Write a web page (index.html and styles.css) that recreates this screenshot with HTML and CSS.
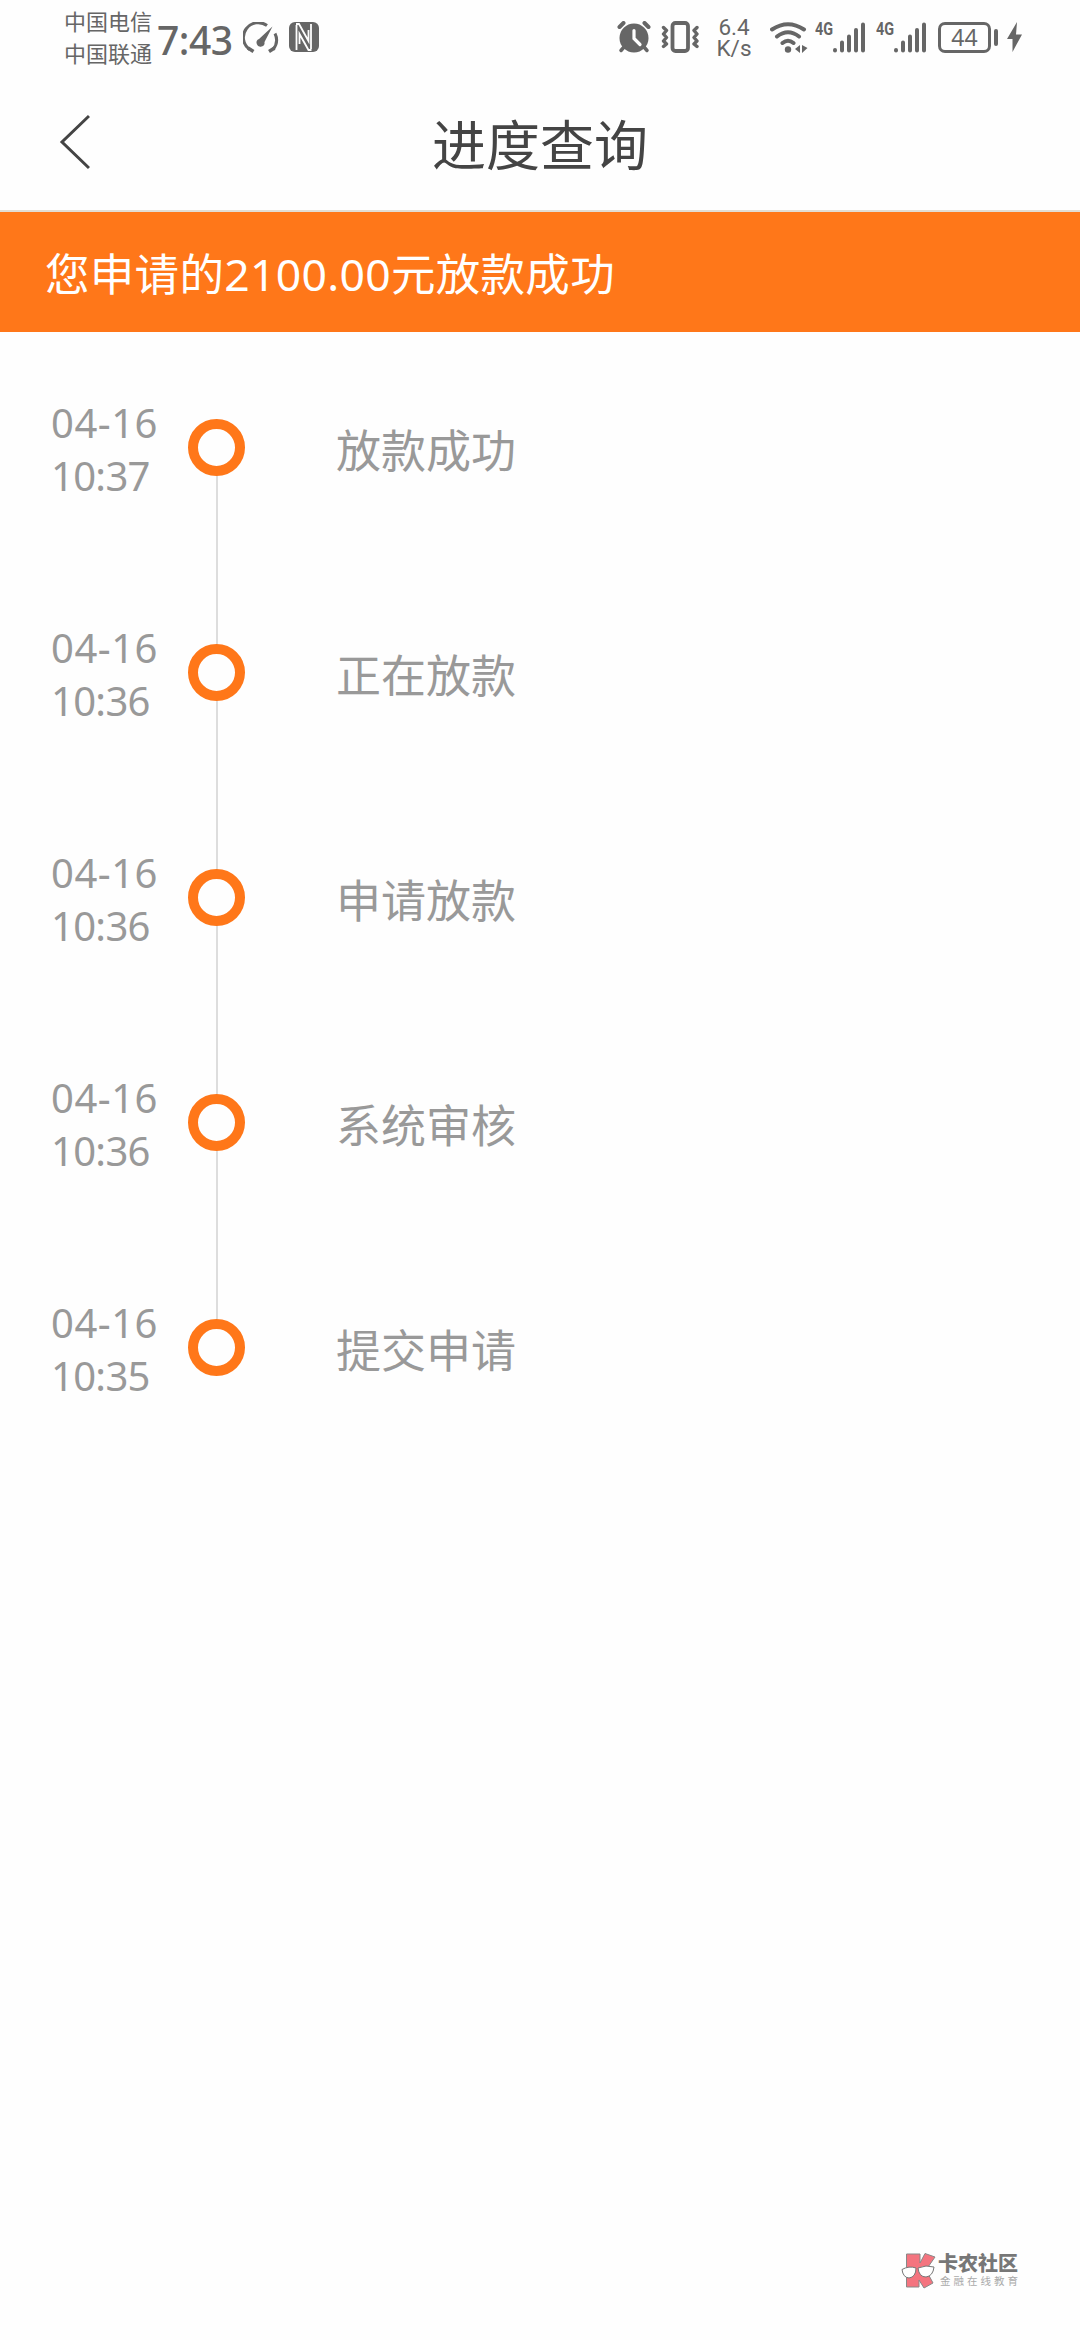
FILE: index.html
```html
<!DOCTYPE html>
<html lang="zh-CN">
<head>
    <meta charset="UTF-8">
    <meta name="viewport" content="width=device-width, initial-scale=1.0">
    <title>进度查询</title>
    <link rel="stylesheet" href="styles.css">
</head>
<body>
    <div class="status-bar">
        <div class="carriers">
            <span>中国电信</span>
            <span>中国联通</span>
        </div>
        <span class="clock">7:43</span>
        <svg class="icon gauge" width="36" height="34" viewBox="0 0 36 34">
            <path d="M6.500 27.500A14.500 14.500 0 0 1 24 3.500M32 11.500a15 15 0 0 1-2 16" fill="none" stroke="#666" stroke-width="3"/>
            <path d="M5 26l5.500 3.500M31.500 26l-5.500 3.500" stroke="#666" stroke-width="3.500"/>
            <path d="M29.500 4.500L21.500 20a4 4 0 1 1-5.500-3z" fill="#666"/>
        </svg>
        <svg class="icon nfc" width="30" height="30" viewBox="0 0 30 30">
            <rect width="30" height="30" rx="6" fill="#666"/>
            <path d="M7.500 28V3M22 2v25" fill="none" stroke="#fefefe" stroke-width="1.800"/>
            <path d="M7 2h3l9.500 17V8M22.500 28h-3L10.500 12v10" fill="none" stroke="#fefefe" stroke-width="1.800"/>
        </svg>

        <div class="status-right">
            <svg class="icon alarm" width="34" height="32" viewBox="0 0 34 32">
                <circle cx="17" cy="17" r="14.500" fill="#666"/>
                <path d="M2.500 6l4-4M31.500 6l-4-4" stroke="#666" stroke-width="4" stroke-linecap="round"/>
                <path d="M7 26l-3 3.500M27 26l3 3.500" stroke="#666" stroke-width="3.500" stroke-linecap="round"/>
                <path d="M17 9.500v8l6 6" fill="none" stroke="#fefefe" stroke-width="3.200" stroke-linecap="round"/>
            </svg>
            <svg class="icon vibrate" width="38" height="32" viewBox="0 0 38 32">
                <rect x="11.500" y="2" width="15.500" height="28" rx="3" fill="none" stroke="#666" stroke-width="3.800"/>
                <path d="M2.500 6.500l3 3-3 3.500 3 3.500-3 3.500 3 3-3 2.500M36 6.500l-3 3 3 3.500-3 3.500 3 3.500-3 3 3 2.500" fill="none" stroke="#666" stroke-width="3.400" stroke-linecap="round" stroke-linejoin="round"/>
            </svg>
            <div class="speed">
                <span>6.4</span>
                <span>K/s</span>
            </div>
            <svg class="icon wifi" width="38" height="32" viewBox="0 0 38 32">
                <path d="M2 7.500Q18 -3 34 7.500M7 14.500q11-8.500 22 0M12.500 21q5.500-4.500 11 0" fill="none" stroke="#666" stroke-width="4" stroke-linecap="round"/>
                <circle cx="18" cy="27.500" r="3.200" fill="#666"/>
                <path d="M25 27l5-4v8zM32 23l5.500 3-5.500 5z" fill="#666"/>
            </svg>
            <div class="signal">
                <span class="net">4G</span>
                <svg class="icon" width="32" height="32" viewBox="0 0 32 32">
                    <path d="M2 28v.5M9 20.500v8M16 14.500v14M23 8v20.500M30 2.500v26" stroke="#666" stroke-width="4" stroke-linecap="round"/>
                </svg>
            </div>
            <div class="signal">
                <span class="net">4G</span>
                <svg class="icon" width="32" height="32" viewBox="0 0 32 32">
                    <path d="M2 28v.5M9 20.500v8M16 14.500v14M23 8v20.500M30 2.500v26" stroke="#666" stroke-width="4" stroke-linecap="round"/>
                </svg>
            </div>
            <div class="battery">44</div>
            <div class="battery-tip"></div>
            <svg class="icon bolt" width="15" height="30" viewBox="0 0 15 30">
                <path d="M10 0L0 17h5.500v13L15 12.500H9z" fill="#666"/>
            </svg>
        </div>
    </div>

    <div class="nav">
        <svg class="back" width="32" height="56" viewBox="0 0 32 56">
            <path d="M31 2L4 28l27 26" fill="none" stroke="#444" stroke-width="3"/>
        </svg>
        <h1>进度查询</h1>
    </div>

    <div class="banner">您申请的2100.00元放款成功</div>

    <ul class="timeline">
        <li>
            <div class="time"><span class="date">04-16</span><span class="hour">10:37</span></div>
            <div class="dot"></div>
            <div class="label">放款成功</div>
        </li>
        <li>
            <div class="time"><span class="date">04-16</span><span class="hour">10:36</span></div>
            <div class="dot"></div>
            <div class="label">正在放款</div>
        </li>
        <li>
            <div class="time"><span class="date">04-16</span><span class="hour">10:36</span></div>
            <div class="dot"></div>
            <div class="label">申请放款</div>
        </li>
        <li>
            <div class="time"><span class="date">04-16</span><span class="hour">10:36</span></div>
            <div class="dot"></div>
            <div class="label">系统审核</div>
        </li>
        <li>
            <div class="time"><span class="date">04-16</span><span class="hour">10:35</span></div>
            <div class="dot"></div>
            <div class="label">提交申请</div>
        </li>
    </ul>

    <div class="watermark">
        <svg width="35" height="36" viewBox="0 0 35 36">
            <path d="M5.500 1H19v9l5-9.500 10 3.500-9 13 7 13-9 5-5-8v7H5.500z" fill="#f4747f" stroke="#888" stroke-width="1"/>
            <path d="M1 16.500q7-4 14-1.500 0 9-7 10-6-.5-7-8.500zM17 15q8-3.500 16-1-1 9-8 10-7 0-8-9z" fill="#fff" stroke="#777" stroke-width="1"/>
        </svg>
        <div class="watermark-text">
            <strong>卡农社区</strong>
            <span>金融在线教育</span>
        </div>
    </div>
</body>
</html>
```
FILE: styles.css
```css
* {
    box-sizing: border-box;
    margin: 0;
    padding: 0;
}
body {
    display: flex;
    flex-direction: column;
    width: 1080px;
    height: 2340px;
    background-color: #fefefe;
    font-family: "Noto Sans", "Noto Sans CJK SC", sans-serif;
}

/* Status bar */
.status-bar {
    display: flex;
    align-items: flex-start;
    height: 80px;
    padding-left: 64px;
    color: #666;
}
.icon {
    flex: none;
    margin-top: 22px;
}
.carriers {
    display: flex;
    flex-direction: column;
    width: 93px;
    padding-top: 4px;
    font-family: "Noto Sans CJK SC", sans-serif;
    font-size: 22px;
    line-height: 32px;
}
.clock {
    width: 86px;
    padding-top: 15px;
    font-size: 39px;
    font-weight: 500;
    line-height: 50px;
    letter-spacing: -0.5px;
}
.nfc {
    margin-left: 10px;
}
.status-right {
    display: flex;
    align-items: flex-start;
    margin-left: auto;
    padding-right: 58px;
}
.alarm,
.vibrate {
    margin-top: 21px;
}
.vibrate {
    margin-left: 10px;
}
.speed {
    display: flex;
    flex-direction: column;
    align-items: center;
    width: 38px;
    margin: 17px 17px 0 16px;
    font-family: Roboto, sans-serif;
    font-size: 22.500px;
    line-height: 21px;
}
.signal {
    display: flex;
    width: 50px;
    margin-left: 7px;
    margin-right: 4px;
}
.net {
    width: 18px;
    margin-top: 18px;
    font-family: Roboto, sans-serif;
    font-size: 18px;
    font-weight: 700;
    line-height: 22px;
    transform: scaleX(0.8);
    transform-origin: left;
}
.battery {
    width: 53px;
    height: 31px;
    margin: 22px 0 0 8px;
    border: 3px solid #666;
    border-radius: 7px;
    font-size: 23px;
    line-height: 25px;
    text-align: center;
}
.battery-tip {
    width: 4px;
    height: 17px;
    margin: 29px 9px 0 3px;
    border-radius: 2px;
    background-color: #666;
}

/* Title bar */
.nav {
    display: grid;
    grid-template-columns: 120px 1fr 120px;
    height: 132px;
    border-bottom: 2px solid #e2ddd5;
}
.back {
    margin: 34px 0 0 58px;
}
.nav h1 {
    padding-top: 25px;
    color: #444;
    font-size: 54px;
    font-weight: 400;
    line-height: 80px;
    text-align: center;
}
.banner {
    height: 120px;
    padding: 2px 0 0 45px;
    background-color: #ff7719;
    color: #fff;
    font-size: 44.500px;
    line-height: 120px;
    letter-spacing: 0.3px;
}

/* Timeline */
.timeline {
    list-style: none;
    padding-top: 87px;
}
.timeline li {
    display: grid;
    grid-template-columns: 188px 57px 1fr;
    height: 225px;
    /* line between the dots */
    background: linear-gradient(#ddd, #ddd) 216px 0 / 2px 225px no-repeat;
}
.timeline li:last-child {
    background: none;
}
.time {
    display: flex;
    flex-direction: column;
    margin-top: -23px;
    padding-left: 51px;
    color: #999;
    font-size: 40px;
    line-height: 53px;
}
.date {
    letter-spacing: 0.5px;
}
.hour {
    letter-spacing: -0.7px;
}
.dot {
    width: 57px;
    height: 57px;
    border: 10px solid #ff7719;
    border-radius: 50%;
    background-color: #fefefe;
}
.label {
    padding: 2px 0 0 91px;
    color: #999;
    font-size: 45px;
    line-height: 60px;
}

/* Watermark */
.watermark {
    display: flex;
    gap: 2px;
    margin: auto 59px 51px auto;
}
.watermark-text {
    display: flex;
    flex-direction: column;
    width: 83px;
    white-space: nowrap;
}
.watermark strong {
    color: #777;
    font-size: 20px;
    font-weight: 900;
    line-height: 22px;
}
.watermark span {
    padding-left: 2px;
    color: #aaa;
    font-size: 10.500px;
    line-height: 12px;
    letter-spacing: 3px;
}
```
